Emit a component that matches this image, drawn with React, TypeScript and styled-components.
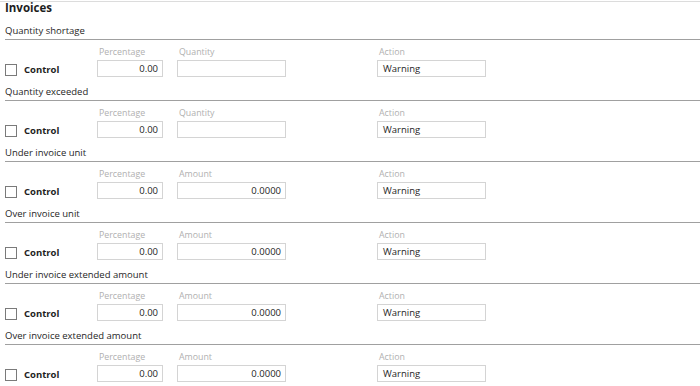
import React from "react";
import styled, { createGlobalStyle } from "styled-components";

const Global = createGlobalStyle`
  html, body { margin: 0; padding: 0; background: #fff; }
  body { font-family: "Open Sans", "Noto Sans", sans-serif; color: #333; }
  * { box-sizing: border-box; }
`;

const Page = styled.div`
  width: 700px;
  padding-top: 1px;
`;

const Header = styled.div`
  border-top: 1px solid #dcdcdc;
  height: 21px;
  padding-left: 5px;
  font-size: 11.5px;
  font-weight: 700;
  line-height: 12px;
  color: #1e1e1e;
`;

const Section = styled.section`
  padding-left: 5px;
  padding-bottom: 6px;
`;

const Title = styled.div`
  height: 18px;
  line-height: 17px;
  font-size: 9.5px;
  color: #262626;
  border-bottom: 1px solid #a0a0a0;
`;

const Row = styled.div`
  display: grid;
  grid-template-columns: 92px 80px 200px 110px;
  align-items: end;
`;

const Control = styled.label`
  display: flex;
  align-items: center;
  gap: 7px;
  height: 17px;
  margin-bottom: -1px;
  font-size: 9.5px;
  font-weight: 700;
  color: #1e1e1e;
`;

const Box = styled.span`
  width: 12px;
  height: 12px;
  border: 1px solid #7a7a7a;
  background: #fff;
`;

const Field = styled.div<{ $w: number }>`
  display: flex;
  flex-direction: column;
  width: ${(p) => p.$w}px;
`;

const Label = styled.div`
  height: 20px;
  padding-top: 6px;
  line-height: 12px;
  font-size: 8.8px;
  color: #b0b0b0;
  padding-left: 2px;
`;

const Input = styled.div<{ $right?: boolean }>`
  height: 17px;
  border: 1px solid #d4d4d4;
  font-size: 9.5px;
  line-height: 15px;
  color: #262626;
  padding: 0 4px 0 5px;
  text-align: ${(p) => (p.$right ? "right" : "left")};
`;

type Sec = { title: string; second: string; secondValue: string };

const sections: Sec[] = [
  { title: "Quantity shortage", second: "Quantity", secondValue: "" },
  { title: "Quantity exceeded", second: "Quantity", secondValue: "" },
  { title: "Under invoice unit", second: "Amount", secondValue: "0.0000" },
  { title: "Over invoice unit", second: "Amount", secondValue: "0.0000" },
  { title: "Under invoice extended amount", second: "Amount", secondValue: "0.0000" },
  { title: "Over invoice extended amount", second: "Amount", secondValue: "0.0000" },
];

export default function App() {
  return (
    <Page>
      <Global />
      <Header>Invoices</Header>
      {sections.map((s) => (
        <Section key={s.title}>
          <Title>{s.title}</Title>
          <Row>
            <Control>
              <Box />
              Control
            </Control>
            <Field $w={66}>
              <Label>Percentage</Label>
              <Input $right>0.00</Input>
            </Field>
            <Field $w={109}>
              <Label>{s.second}</Label>
              <Input $right>{s.secondValue}</Input>
            </Field>
            <Field $w={109}>
              <Label>Action</Label>
              <Input>Warning</Input>
            </Field>
          </Row>
        </Section>
      ))}
    </Page>
  );
}
